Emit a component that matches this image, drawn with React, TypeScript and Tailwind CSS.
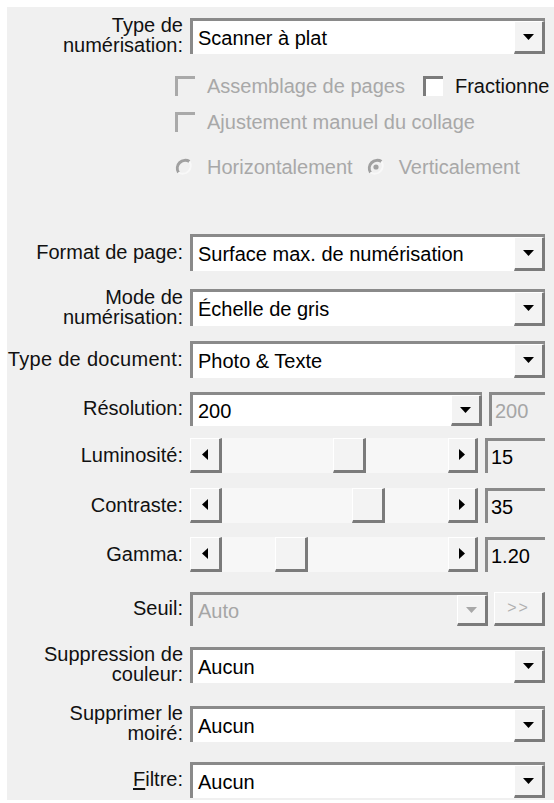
import React from "react";

// Fenêtre de réglages du scanner (style Windows classique)

const Arrow = ({ dir, muted }: { dir: "down" | "left" | "right"; muted?: boolean }) => {
  const fill = muted ? "#a8a8a8" : "#000";
  if (dir === "down")
    return (
      <svg width="11" height="6" viewBox="0 0 11 6">
        <polygon points="0,0 11,0 5.5,6" fill={fill} />
      </svg>
    );
  if (dir === "left")
    return (
      <svg width="6" height="11" viewBox="0 0 6 11">
        <polygon points="6,0 6,11 0,5.5" fill={fill} />
      </svg>
    );
  return (
    <svg width="6" height="11" viewBox="0 0 6 11">
      <polygon points="0,0 0,11 6,5.5" fill={fill} />
    </svg>
  );
};

const DropButton = ({ muted }: { muted?: boolean }) => (
  <div className="flex w-[31px] shrink-0 items-center justify-center border-t border-l border-t-white border-l-white border-r-[3px] border-b-[3px] border-r-[#7b7b7b] border-b-[#7b7b7b] bg-[#f3f3f3]">
    <Arrow dir="down" muted={muted} />
  </div>
);

interface ComboProps {
  value: string;
  w?: string;
  disabled?: boolean;
}

const Combo = ({ value, w = "w-[355px]", disabled }: ComboProps) => (
  <div
    className={`flex h-full ${w} border-t-[3px] border-l-[3px] border-t-[#8a8a8a] border-l-[#8a8a8a] ${
      disabled ? "bg-[#f0f0f0]" : "bg-white"
    }`}
  >
    <div
      className={`flex flex-1 items-center pl-[5px] ${disabled ? "text-[#a6a6a6]" : "text-black"}`}
    >
      {value}
    </div>
    <DropButton muted={disabled} />
  </div>
);

const RaisedButton = ({ w, children }: { w: string; children: React.ReactNode }) => (
  <div
    className={`flex ${w} h-full shrink-0 items-center justify-center border-t border-l border-t-white border-l-white border-r-[3px] border-b-[3px] border-r-[#7b7b7b] border-b-[#7b7b7b] bg-[#f3f3f3]`}
  >
    {children}
  </div>
);

const ValueBox = ({ value, w = "w-[60px]", muted }: { value: string; w?: string; muted?: boolean }) => (
  <div
    className={`flex h-full ${w} items-center border-t-[3px] border-l-[3px] border-t-[#8a8a8a] border-l-[#8a8a8a] bg-[#f0f0f0] pl-[3px] ${
      muted ? "text-[#a6a6a6]" : "text-black"
    }`}
  >
    {value}
  </div>
);

const Slider = ({ value, pos }: { value: string; pos: number }) => (
  <div className="flex h-full items-stretch">
    <RaisedButton w="w-[32px]">
      <Arrow dir="left" />
    </RaisedButton>
    <div className="relative w-[226px] bg-[#f7f7f7]">
      <div className="absolute top-0 bottom-0" style={{ left: pos }}>
        <RaisedButton w="w-[33px]">
          <span />
        </RaisedButton>
      </div>
    </div>
    <RaisedButton w="w-[30px]">
      <Arrow dir="right" />
    </RaisedButton>
    <div className="ml-[7px] h-full">
      <ValueBox value={value} />
    </div>
  </div>
);

const Check = ({ enabled }: { enabled?: boolean }) => (
  <div
    className={`h-[20px] w-[20px] shrink-0 border-t-[3px] border-l-[3px] ${
      enabled
        ? "border-t-[#7b7b7b] border-l-[#7b7b7b] bg-white"
        : "border-t-[#a9a9a9] border-l-[#a9a9a9] bg-[#f0f0f0]"
    }`}
  />
);

const Radio = ({ checked }: { checked?: boolean }) => (
  <svg width="18" height="18" viewBox="0 0 18 18" className="shrink-0">
    <path d="M14.5 3.5 A8 8 0 0 0 3.5 14.5" fill="none" stroke="#a0a0a0" strokeWidth="3" />
    <path d="M3.5 14.5 A8 8 0 0 0 14.5 3.5" fill="none" stroke="#f8f8f8" strokeWidth="2" />
    {checked && <circle cx="9" cy="9" r="2.6" fill="#a0a0a0" />}
  </svg>
);

interface RowProps {
  label: React.ReactNode;
  mt: string;
  h: string;
  children: React.ReactNode;
}

const Row = ({ label, mt, h, children }: RowProps) => (
  <div className={`flex ${mt} ${h} items-stretch`}>
    <div className="flex w-[176px] shrink-0 items-center justify-end text-right leading-[20px]">
      <div className="-mt-[2px]">{label}</div>
    </div>
    <div className="ml-[7px] h-full">{children}</div>
  </div>
);

export default function App() {
  return (
    <div className="min-h-screen bg-white pt-[7px] pl-[7px] font-['Liberation_Sans',Arial,sans-serif] text-[20px] text-[#111]">
      <div className="flex h-[793px] flex-col overflow-hidden bg-[#f0f0f0]">
        <Row
          mt="mt-[11px]"
          h="h-[36px]"
          label={
            <>
              Type de
              <br />
              numérisation:
            </>
          }
        >
          <Combo value="Scanner à plat" />
        </Row>

        <div className="mt-[22px] flex h-[20px] items-center pl-[168px] whitespace-nowrap">
          <Check />
          <span className="ml-[12px] text-[#a8a8a8]">Assemblage de pages</span>
          <div className="ml-[18px]">
            <Check enabled />
          </div>
          <span className="ml-[12px]">Fractionne</span>
        </div>

        <div className="mt-[16px] flex h-[20px] items-center pl-[168px] whitespace-nowrap">
          <Check />
          <span className="ml-[12px] text-[#a8a8a8]">Ajustement manuel du collage</span>
        </div>

        <div className="mt-[25px] flex h-[20px] items-center pl-[168px] whitespace-nowrap text-[#a8a8a8]">
          <Radio />
          <span className="ml-[14px]">Horizontalement</span>
          <div className="ml-[14px] flex items-center">
            <Radio checked />
          </div>
          <span className="ml-[14px]">Verticalement</span>
        </div>

        <Row mt="mt-[57px]" h="h-[37px]" label="Format de page:">
          <Combo value="Surface max. de numérisation" />
        </Row>

        <Row
          mt="mt-[18px]"
          h="h-[37px]"
          label={
            <>
              Mode de
              <br />
              numérisation:
            </>
          }
        >
          <Combo value="Échelle de gris" />
        </Row>

        <Row mt="mt-[15px]" h="h-[37px]" label={<span className="whitespace-nowrap tracking-[0.3px]">Type de document:</span>}>
          <Combo value="Photo & Texte" />
        </Row>

        <Row mt="mt-[14px]" h="h-[34px]" label="Résolution:">
          <div className="flex h-full">
            <Combo value="200" w="w-[292px]" />
            <div className="ml-[7px] h-full">
              <ValueBox value="200" w="w-[56px]" muted />
            </div>
          </div>
        </Row>

        <Row mt="mt-[12px]" h="h-[35px]" label="Luminosité:">
          <Slider value="15" pos={111} />
        </Row>

        <Row mt="mt-[15px]" h="h-[35px]" label="Contraste:">
          <Slider value="35" pos={130} />
        </Row>

        <Row mt="mt-[14px]" h="h-[35px]" label="Gamma:">
          <Slider value="1.20" pos={53} />
        </Row>

        <Row mt="mt-[20px]" h="h-[34px]" label="Seuil:">
          <div className="flex h-full">
            <Combo value="Auto" w="w-[298px]" disabled />
            <div className="ml-[6px] h-full">
              <RaisedButton w="w-[51px]">
                <span className="text-[16px] tracking-[2px] text-[#b0b0b0]">&gt;&gt;</span>
              </RaisedButton>
            </div>
          </div>
        </Row>

        <Row
          mt="mt-[21px]"
          h="h-[36px]"
          label={
            <>
              <span className="whitespace-nowrap">Suppression de</span>
              <br />
              couleur:
            </>
          }
        >
          <Combo value="Aucun" />
        </Row>

        <Row
          mt="mt-[23px]"
          h="h-[36px]"
          label={
            <>
              Supprimer le
              <br />
              moiré:
            </>
          }
        >
          <Combo value="Aucun" />
        </Row>

        <Row
          mt="mt-[20px]"
          h="h-[36px]"
          label={
            <>
              <span className="underline underline-offset-2">F</span>iltre:
            </>
          }
        >
          <Combo value="Aucun" />
        </Row>
      </div>
    </div>
  );
}
